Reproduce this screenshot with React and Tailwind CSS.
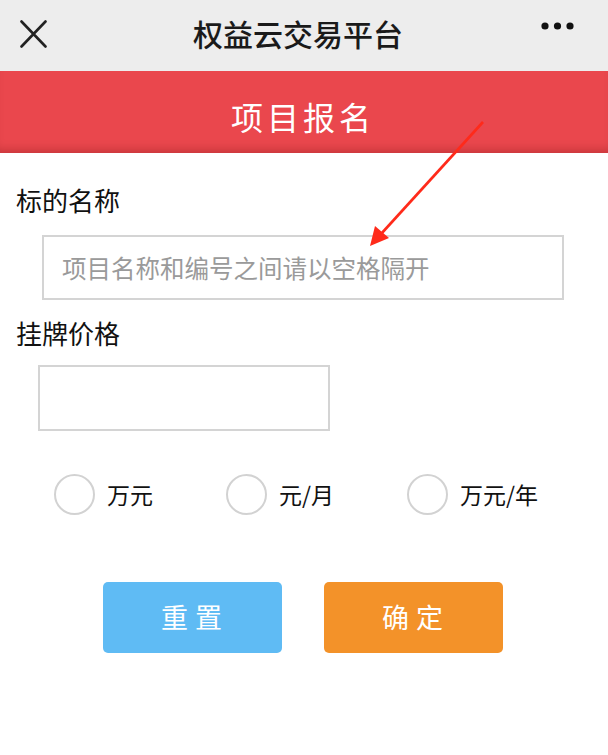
import { useState } from 'react'

const cjk = { fontFamily: '"Noto Sans CJK SC", "Noto Sans", sans-serif' }

// Single unit option (circle + label)
function UnitOption({ label, checked, onSelect }) {
  return (
    <button onClick={onSelect} className="flex items-center gap-[12px]">
      <span className="w-[41px] h-[41px] rounded-full border-2 border-[#d2d2d2] flex items-center justify-center bg-white">
        {checked && <span className="w-[21px] h-[21px] rounded-full bg-[#f39229]" />}
      </span>
      <span className="text-[23px] leading-[23px] text-[#111]">{label}</span>
    </button>
  )
}

function App() {
  const [name, setName] = useState('')
  const [price, setPrice] = useState('')
  const [unit, setUnit] = useState(null)

  const handleReset = () => {
    setName('')
    setPrice('')
    setUnit(null)
  }

  return (
    <div className="relative min-h-[755px] w-[608px] bg-white overflow-hidden" style={cjk}>

      {/* Top nav bar */}
      <div className="h-[71px] bg-[#ededed] flex items-center justify-between px-[20px]">
        <svg width="27" height="28" viewBox="0 0 27 28" className="mb-[4px]">
          <path d="M1.5 1.5 L25.5 26.5 M25.5 1.5 L1.5 26.5" stroke="#222" strokeWidth="2.6" strokeLinecap="round" />
        </svg>
        <h1 className="text-[30px] leading-[30px] font-medium text-[#1a1a1a] mb-[16px] mt-[10px] ml-[8px]">权益云交易平台</h1>
        <svg width="34" height="8" viewBox="0 0 34 8" className="mb-[20px] mr-[13px]">
          <circle cx="4" cy="4" r="3.6" fill="#111" />
          <circle cx="16.5" cy="4" r="3.6" fill="#111" />
          <circle cx="29" cy="4" r="3.6" fill="#111" />
        </svg>
      </div>

      {/* Red title bar */}
      <div className="h-[82px] bg-[#ea474d] shadow-[inset_0_-9px_8px_-5px_rgba(90,0,0,0.22)] flex items-center justify-center">
        <span className="text-[32px] leading-[32px] text-white tracking-[4px] pl-[4px] mt-[8px] mr-[6px]">项目报名</span>
      </div>

      {/* Form */}
      <div className="flex flex-col">
        <label className="ml-[16px] mt-[34px] text-[26px] leading-[26px] text-[#111]">标的名称</label>
        <input
          value={name}
          onChange={e => setName(e.target.value)}
          placeholder="项目名称和编号之间请以空格隔开"
          className="ml-[42px] mt-[22px] w-[522px] h-[65px] border-2 border-[#d4d4d4] pl-[18px] text-[24.5px] text-[#333] placeholder:text-[#9a9a9a] outline-none"
        />

        <label className="ml-[16px] mt-[20px] text-[26px] leading-[26px] text-[#111]">挂牌价格</label>
        <input
          value={price}
          onChange={e => setPrice(e.target.value)}
          className="ml-[38px] mt-[19px] w-[292px] h-[66px] border-2 border-[#d4d4d4] px-[14px] text-[24px] text-[#333] outline-none"
        />

        {/* Unit options */}
        <div className="flex items-center gap-[73px] ml-[54px] mt-[43px]">
          <UnitOption label="万元" checked={unit === 'wan'} onSelect={() => setUnit('wan')} />
          <UnitOption label="元/月" checked={unit === 'month'} onSelect={() => setUnit('month')} />
          <UnitOption label="万元/年" checked={unit === 'year'} onSelect={() => setUnit('year')} />
        </div>

        {/* Buttons */}
        <div className="flex justify-center gap-[42px] mt-[67px] mr-[2px]">
          <button
            onClick={handleReset}
            className="w-[179px] h-[71px] rounded-[5px] bg-[#5fbbf4] text-white text-[27px] tracking-[7px] pl-[5px]"
          >
            重置
          </button>
          <button className="w-[179px] h-[71px] rounded-[5px] bg-[#f39229] text-white text-[27px] tracking-[7px] pl-[5px]">
            确定
          </button>
        </div>
      </div>

      {/* Red annotation arrow */}
      <svg className="absolute left-0 top-0 pointer-events-none" width="608" height="755">
        <line x1="483" y1="122" x2="381" y2="234" stroke="#ff2a1a" strokeWidth="2.6" />
        <path d="M370 246 L375 226 L389 238 Z" fill="#ff2a1a" />
      </svg>

    </div>
  )
}

export default App
